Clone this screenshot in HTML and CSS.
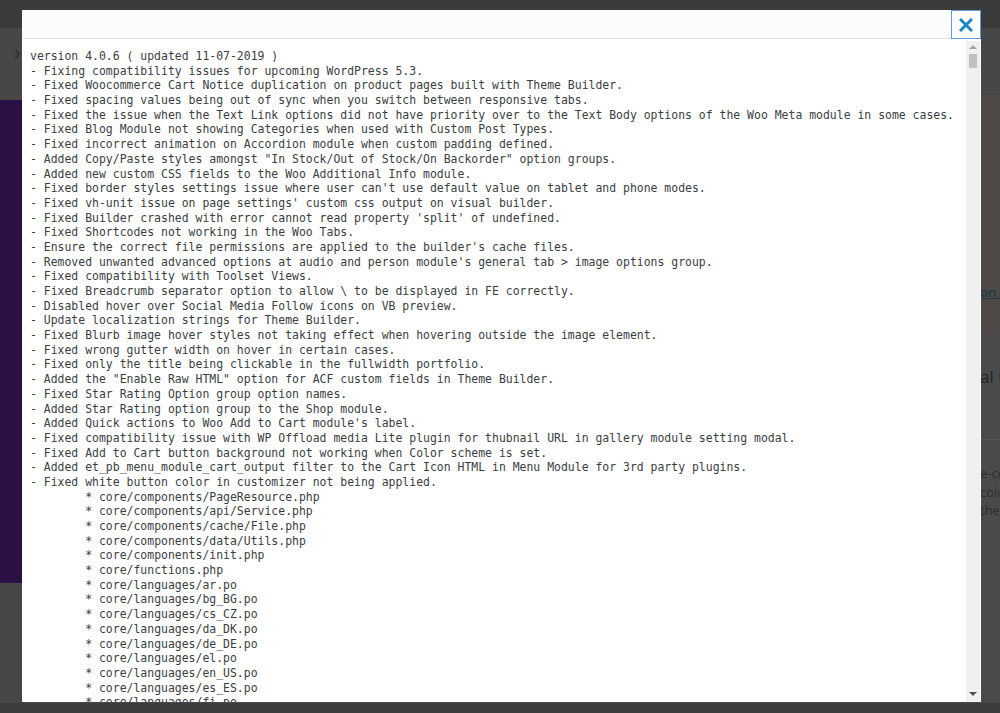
FILE: index.html
```html
<!DOCTYPE html>
<html lang="en">
<head>
    <meta charset="UTF-8">
    <meta name="viewport" content="width=device-width, initial-scale=1.0">
    <title>Changelog</title>
    <link rel="stylesheet" href="styles.css">
</head>
<body>
    <!-- Page behind the overlay -->
    <div class="page">
        <div class="topbar"></div>
        <div class="toolbar"><span class="chevron">&#8250;</span></div>
        <div class="content">
            <div class="main">
                <div class="hero"></div>
                <div class="below"></div>
            </div>
            <aside class="side">
                <div class="side-notice"><a href="#">on 4.0.6</a></div>
                <div class="side-title">al the</div>
                <div class="side-text">
                    <p>e-commerce</p>
                    <p>colors</p>
                    <p>the</p>
                </div>
            </aside>
        </div>
        <div class="footbar"></div>
    </div>

    <!-- Changelog modal -->
    <div class="modal">
        <div class="modal-header">
            <button class="modal-close" title="Close">
                <svg width="14" height="14" viewBox="0 0 14 14"><path d="M2 2 L12 12 M12 2 L2 12" stroke="#1b8ac4" stroke-width="3" stroke-linecap="square"/></svg>
            </button>
        </div>
        <div class="modal-body">
<pre class="changelog">version 4.0.6 ( updated 11-07-2019 )
- Fixing compatibility issues for upcoming WordPress 5.3.
- Fixed Woocommerce Cart Notice duplication on product pages built with Theme Builder.
- Fixed spacing values being out of sync when you switch between responsive tabs.
- Fixed the issue when the Text Link options did not have priority over to the Text Body options of the Woo Meta module in some cases.
- Fixed Blog Module not showing Categories when used with Custom Post Types.
- Fixed incorrect animation on Accordion module when custom padding defined.
- Added Copy/Paste styles amongst "In Stock/Out of Stock/On Backorder" option groups.
- Added new custom CSS fields to the Woo Additional Info module.
- Fixed border styles settings issue where user can't use default value on tablet and phone modes.
- Fixed vh-unit issue on page settings' custom css output on visual builder.
- Fixed Builder crashed with error cannot read property 'split' of undefined.
- Fixed Shortcodes not working in the Woo Tabs.
- Ensure the correct file permissions are applied to the builder's cache files.
- Removed unwanted advanced options at audio and person module's general tab &gt; image options group.
- Fixed compatibility with Toolset Views.
- Fixed Breadcrumb separator option to allow \ to be displayed in FE correctly.
- Disabled hover over Social Media Follow icons on VB preview.
- Update localization strings for Theme Builder.
- Fixed Blurb image hover styles not taking effect when hovering outside the image element.
- Fixed wrong gutter width on hover in certain cases.
- Fixed only the title being clickable in the fullwidth portfolio.
- Added the "Enable Raw HTML" option for ACF custom fields in Theme Builder.
- Fixed Star Rating Option group option names.
- Added Star Rating option group to the Shop module.
- Added Quick actions to Woo Add to Cart module's label.
- Fixed compatibility issue with WP Offload media Lite plugin for thubnail URL in gallery module setting modal.
- Fixed Add to Cart button background not working when Color scheme is set.
- Added et_pb_menu_module_cart_output filter to the Cart Icon HTML in Menu Module for 3rd party plugins.
- Fixed white button color in customizer not being applied.
	* core/components/PageResource.php
	* core/components/api/Service.php
	* core/components/cache/File.php
	* core/components/data/Utils.php
	* core/components/init.php
	* core/functions.php
	* core/languages/ar.po
	* core/languages/bg_BG.po
	* core/languages/cs_CZ.po
	* core/languages/da_DK.po
	* core/languages/de_DE.po
	* core/languages/el.po
	* core/languages/en_US.po
	* core/languages/es_ES.po
	* core/languages/fi.po
	* core/languages/fr_FR.po
	* core/languages/he_IL.po</pre>
            <div class="scrollbar">
                <span class="arrow arrow-up"></span>
                <span class="thumb"></span>
                <span class="track"></span>
                <span class="arrow arrow-down"></span>
            </div>
        </div>
    </div>
</body>
</html>
```

FILE: styles.css
```css
/* Page behind the overlay */
body {
    margin: 0;
    height: 713px;
    overflow: hidden;
    font-family: "Open Sans", Arial, sans-serif;
    background-color: #3d3d3d;
}
.page {
    display: flex;
    flex-direction: column;
    height: 100%;
}
.topbar {
    height: 28px;
    background-color: #3b3b3b;
}
.toolbar {
    height: 72px;
    background-color: #474747;
    display: flex;
    align-items: flex-start;
}
.chevron {
    margin: 11px 0 0 14px;
    font-size: 22px;
    line-height: 24px;
    color: #2c2c2c;
}
.content {
    display: flex;
    flex: 1;
}
.main {
    width: 980px;
    display: flex;
    flex-direction: column;
}
.hero {
    height: 483px;
    background-color: #2b1043;
}
.below {
    flex: 1;
    background-color: #474747;
}
.side {
    flex: 1;
    margin-top: -5px;
    background-color: #4a4a4a;
    white-space: nowrap;
    overflow: hidden;
}
.side-notice {
    height: 52px;
    padding-top: 188px;
    background-color: #4c4946;
    font-size: 13px;
    font-weight: 600;
}
.side-notice a {
    color: #1f3a48;
}
.side-title {
    height: 105px;
    box-sizing: border-box;
    padding-top: 30px;
    font-size: 17px;
    color: #232323;
    border-bottom: 1px solid #555;
}
.side-text {
    padding-top: 24px;
    font-size: 13px;
    color: #2e2e2e;
}
.side-text p {
    margin: 0;
    line-height: 18.5px;
}
.footbar {
    height: 10px;
    background-color: #3d3d3d;
}

/* Modal */
.modal {
    position: fixed;
    top: 10px;
    left: 22px;
    right: 19px;
    bottom: 11px;
    display: flex;
    flex-direction: column;
    background-color: #fff;
}
.modal-header {
    display: flex;
    justify-content: flex-end;
    height: 28px;
    background-color: #fcfcfc;
    border-bottom: 1px solid #e2e2e2;
}
.modal-close {
    width: 30px;
    height: 29px;
    padding: 0;
    margin: 0;
    border: 1px solid #5b9dd9;
    background-color: #fff;
    display: flex;
    align-items: center;
    justify-content: center;
    cursor: pointer;
}
.modal-body {
    flex: 1;
    display: flex;
    min-height: 0;
    padding-top: 2px;
}
.changelog {
    flex: 1;
    margin: 0;
    padding: 8px 8px;
    overflow: hidden;
    font-family: "DejaVu Sans Mono", "Liberation Mono", monospace;
    font-size: 11.46px;
    line-height: 14.68px;
    tab-size: 8;
    color: #3a3e42;
}

/* Fake scrollbar */
.scrollbar {
    width: 14px;
    margin-right: 1px;
    display: flex;
    flex-direction: column;
    align-items: center;
    background-color: #f0f0f0;
}
.arrow {
    width: 0;
    height: 0;
    border-left: 4px solid transparent;
    border-right: 4px solid transparent;
}
.arrow-up {
    margin: 4px 0 5px;
    border-bottom: 4px solid #a3a3a3;
}
.arrow-down {
    margin: 5px 0 6px;
    border-top: 4px solid #505050;
}
.thumb {
    width: 8px;
    height: 14px;
    background-color: #c1c1c1;
}
.track {
    flex: 1;
}
```
